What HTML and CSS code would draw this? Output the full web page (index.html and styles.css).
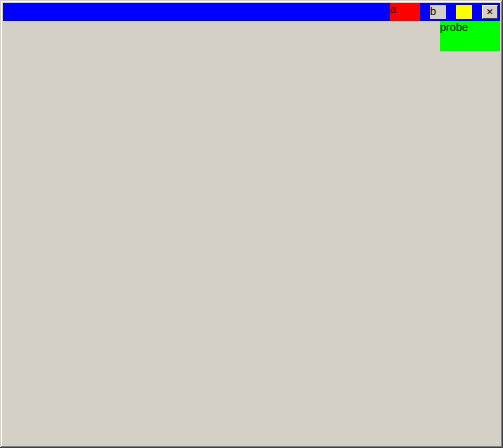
FILE: index.html
```html
<!DOCTYPE html>
<html>

<head>
    <meta charset="UTF-8">
    <link rel="stylesheet" href="styles.css">
    <title>Biblioteca</title>
</head>

<body>
    <div class="window">
        <div class="titlebar">
            <div class="t-a">a</div>
            <div class="t-b">b</div>
            <div class="t-c"></div>
            <div class="t-d">✕</div>
        </div>
        <div class="probe">probe</div>
    </div>
</body>

</html>
```

FILE: styles.css
```css
body {
    margin: 0;
    font-family: 'Liberation Sans', Arial, sans-serif;
    font-size: 11px;
}

.window {
    width: 503px;
    height: 448px;
    box-sizing: border-box;
    padding: 3px;
    background-color: #d4d0c8;
    box-shadow: inset -1px -1px #404040, inset 1px 1px #d4d0c8,
        inset -2px -2px #808080, inset 2px 2px #ffffff;
}

.titlebar {
    height: 18px;
    display: flex;
    justify-content: flex-end;
    gap: 10px;
    background-color: #0000ff;
}

.t-a {
    width: 30px;
    height: 18px;
    background-color: #ff0000;
}

.t-b {
    width: 16px;
    height: 14px;
    margin-top: 2px;
    background-color: #d4d0c8;
}

.t-c {
    width: 16px;
    height: 14px;
    margin-top: 2px;
    background-color: #ffff00;
}

.t-d {
    width: 16px;
    height: 14px;
    margin: 2px 2px 0 0;
    box-sizing: border-box;
    background-color: #d4d0c8;
    border-top: 1px solid #ffffff;
    border-left: 1px solid #ffffff;
    border-right: 1px solid #404040;
    border-bottom: 1px solid #404040;
    text-align: center;
    line-height: 12px;
    font-size: 9px;
}

.probe {
    width: 60px;
    height: 30px;
    margin-left: auto;
    background-color: #00ff00;
}
```
